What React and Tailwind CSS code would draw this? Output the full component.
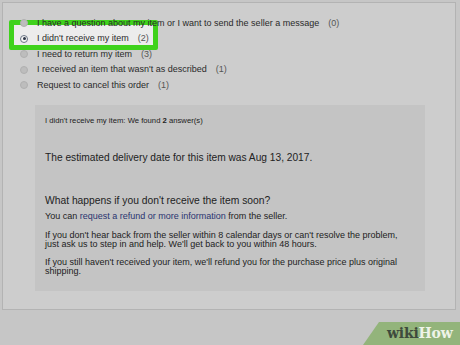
import React from 'react';

const options = [
    { label: 'I have a question about my item or I want to send the seller a message', count: 0 },
    { label: "I didn't receive my item", count: 2, selected: true },
    { label: 'I need to return my item', count: 3 },
    { label: "I received an item that wasn't as described", count: 1 },
    { label: 'Request to cancel this order', count: 1 },
];

const Radio = ({ selected }) => (
    <span
        className={
            selected
                ? 'w-[8px] h-[8px] rounded-full border border-[#6a7484] bg-[#f4f4f4] flex items-center justify-center shrink-0'
                : 'w-[8px] h-[8px] rounded-full border border-[#b0b0b0] bg-[#bdbdbd] shrink-0'
        }
    >
        {selected && <span className="w-[3px] h-[3px] rounded-full bg-[#2c3546]" />}
    </span>
);

const WikiHowBadge = () => (
    <div className="absolute right-0 bottom-0 w-[97px] h-[23px]">
        <svg className="absolute inset-0" width="97" height="23" viewBox="0 0 97 23">
            <polygon points="16,0 97,0 97,23 0,23" fill="#93b47b" />
        </svg>
        <div
            className="absolute left-[24px] top-[2px] text-[14px] font-bold leading-[18px] tracking-[-0.2px]"
            style={{ fontFamily: '"DejaVu Serif", "Liberation Serif", serif' }}
        >
            <span className="text-[#3e4a3c]">wiki</span>
            <span className="text-[#eef3e8]">How</span>
        </div>
    </div>
);

export default function App() {
    return (
        <div
            className="relative w-[460px] h-[345px] overflow-hidden bg-[#c6c6c6] pt-[2px] pl-[2px]"
            style={{ fontFamily: '"Liberation Sans", Arial, sans-serif' }}
        >
            <div className="w-[454px] h-[308px] border border-[#b3b3b3] bg-[#cdcdcd] pt-[12.5px]">
                <ul className="flex flex-col">
                    {options.map((opt) => (
                        <li key={opt.label} className="relative h-[15.5px] flex items-center pl-[17px] text-[9px] text-[#2a2a2a]">
                            {opt.selected && (
                                <span className="absolute left-[6px] top-[-11px] w-[149px] h-[30px] rounded-[2px] border-[5px] border-[#3fd21c] bg-[#ececec] z-10" />
                            )}
                            <span className="relative z-20 flex items-center">
                                <Radio selected={opt.selected} />
                                <span className="ml-[9px] whitespace-nowrap">{opt.label}</span>
                                <span className="ml-[9px] text-[#555]">({opt.count})</span>
                            </span>
                        </li>
                    ))}
                </ul>

                <div className="ml-[32px] mt-[11.5px] w-[390px] h-[186px] bg-[#c4c4c4] pl-[10px] pt-[11px] text-[#222]">
                    <p className="text-[7.7px] leading-[10px]">
                        I didn't receive my item: We found <span className="font-bold">2</span> answer(s)
                    </p>
                    <p className="mt-[26px] text-[10.2px] leading-[12px]">
                        The estimated delivery date for this item was Aug 13, 2017.
                    </p>
                    <p className="mt-[31px] text-[10.3px] leading-[12px]">
                        What happens if you don't receive the item soon?
                    </p>
                    <p className="mt-[4.5px] text-[9px] leading-[11px]">
                        You can <span className="text-[#2a3470]">request a refund or more information</span> from the seller.
                    </p>
                    <p className="mt-[8.5px] text-[9px] leading-[9.5px]">
                        If you don't hear back from the seller within 8 calendar days or can't resolve the problem,
                        <br />
                        just ask us to step in and help. We'll get back to you within 48 hours.
                    </p>
                    <p className="mt-[8px] text-[9px] leading-[9.5px]">
                        If you still haven't received your item, we'll refund you for the purchase price plus original
                        <br />
                        shipping.
                    </p>
                </div>
            </div>
            <WikiHowBadge />
        </div>
    );
}
